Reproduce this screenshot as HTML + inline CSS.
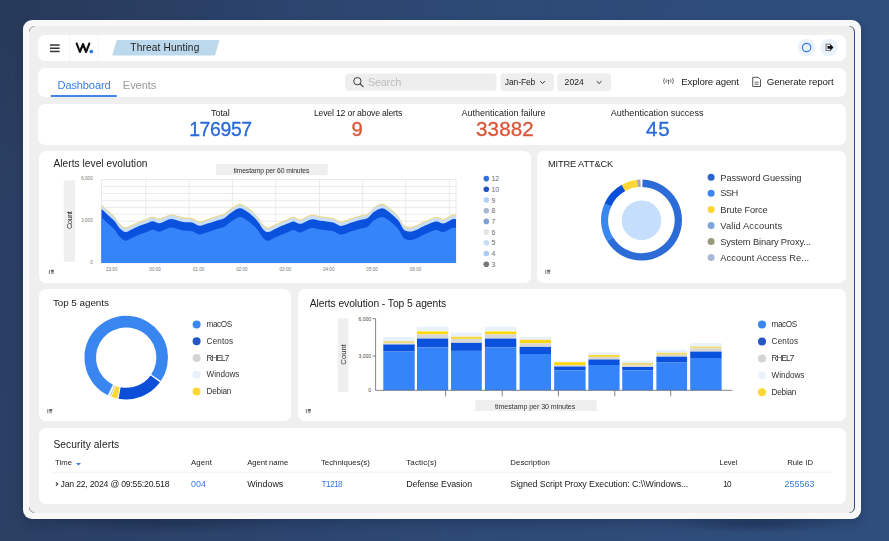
<!DOCTYPE html>
<html><head><meta charset="utf-8">
<style>
html,body{margin:0;padding:0}
body{width:889px;height:541px;overflow:hidden;position:relative;font-family:"Liberation Sans",sans-serif;color:#222;
background:radial-gradient(ellipse 300px 200px at 0 0,rgba(40,55,85,.6),rgba(40,55,85,0)),linear-gradient(90deg,#2c4166 0%,#2e4a76 50%,#2f4e7d 100%);}
.dots{position:absolute;inset:0;background-image:radial-gradient(rgba(25,35,60,.22) 0.5px,transparent 0.8px);background-size:2px 2px;-webkit-mask-image:linear-gradient(100deg,#000 0%,rgba(0,0,0,.5) 40%,transparent 70%)}
.frame{position:absolute;left:23px;top:20px;width:838px;height:499px;background:#f8f8f8;border-radius:9px;box-shadow:0 5px 10px rgba(15,25,45,.22)}
.inner{position:absolute;left:29px;top:26px;width:825px;height:487px;background:#efefef;border-radius:6px;border-right:1px solid #2f4a77}
.card{position:absolute;background:#fff;border-radius:7px}
.t{position:absolute;white-space:pre;line-height:1}
svg{position:absolute;left:0;top:0}
</style></head><body>
<div class="dots"></div>
<div style="position:absolute;left:670px;top:514px;width:170px;height:22px;background:radial-gradient(ellipse 50% 50% at 50% 40%,rgba(25,40,70,.45),rgba(25,40,70,0))"></div>
<div style="position:absolute;left:50px;top:514px;width:240px;height:22px;background:radial-gradient(ellipse 50% 50% at 50% 40%,rgba(25,40,70,.35),rgba(25,40,70,0))"></div>
<div class="frame"></div>
<div class="inner"></div>
<div class="card" style="left:37.5px;top:34.7px;width:808.5px;height:26.3px"></div>
<div class="card" style="left:37.5px;top:68px;width:808.5px;height:28.5px"></div>
<div class="card" style="left:37.5px;top:103.5px;width:808.5px;height:41.5px"></div>
<div class="card" style="left:38.5px;top:150.8px;width:492px;height:131.9px"></div>
<div class="card" style="left:536.6px;top:150.8px;width:309.4px;height:131.9px"></div>
<div class="card" style="left:38.5px;top:288.7px;width:252.5px;height:132.1px"></div>
<div class="card" style="left:298px;top:288.7px;width:548px;height:132.1px"></div>
<div class="card" style="left:38.5px;top:428px;width:807.5px;height:76px"></div>

<svg width="889" height="541" viewBox="0 0 889 541" style="font-family:'Liberation Sans',sans-serif">
<g fill="none" stroke="#6d7585" stroke-width="0.7">
<path d="M29.3,31.5 A5,5 0 0 1 34.3,26.5"/>
<path d="M29.3,507.5 A5,5 0 0 0 34.3,512.5"/>
<path d="M849.5,26.5 A5,5 0 0 1 854.5,31.5"/>
<path d="M854.5,507.5 A5,5 0 0 1 849.5,512.5"/>
</g>
<!-- header -->
<polyline points="76.7,43.6 79.9,52 83,44 86.1,52 89.3,43.6" fill="none" stroke="#111" stroke-width="2.1" stroke-linecap="round" stroke-linejoin="round"/>
<circle cx="91.3" cy="51.6" r="1.9" fill="#2f7bf0"/>
<g fill="#333"><rect x="50" y="44.3" width="9.6" height="1.5"/><rect x="50" y="47.5" width="9.6" height="1.5"/><rect x="50" y="50.7" width="9.6" height="1.5"/></g>
<line x1="69.6" y1="36" x2="69.6" y2="60" stroke="#f5f5f5" stroke-width="1"/>
<line x1="98.3" y1="36" x2="98.3" y2="60" stroke="#f5f5f5" stroke-width="1"/>
<path d="M117.5,40.1 L218.5,40.1 Q219.5,40.1 219.2,41 L215.2,55 Q214.9,55.6 214,55.6 L113,55.6 Q112.1,55.6 112.4,54.7 L116.5,41 Q116.8,40.1 117.5,40.1 Z" fill="#bcd8ec"/>
<circle cx="806.6" cy="47.5" r="8.8" fill="#e9f2fd"/>
<circle cx="806.6" cy="47.5" r="4.2" fill="none" stroke="#3a7de0" stroke-width="1.2"/>
<circle cx="829.2" cy="47.5" r="8.8" fill="#e9f2fd"/>
<rect x="826" y="44.2" width="4.5" height="6.4" fill="none" stroke="#666" stroke-width="0.9"/>
<path d="M827.5,46 L830.5,46 L830.5,44.3 L833.5,47.4 L830.5,50.5 L830.5,48.8 L827.5,48.8 Z" fill="#111"/>
<!-- tabs row -->
<rect x="50.7" y="95" width="66.1" height="2" fill="#4287e8"/>
<rect x="345.2" y="73.5" width="151.3" height="17.3" rx="3" fill="#eeeeee"/>
<circle cx="357.4" cy="81.2" r="3.7" fill="none" stroke="#333" stroke-width="0.95"/>
<line x1="360.1" y1="83.9" x2="363.1" y2="86.7" stroke="#333" stroke-width="1.1" stroke-linecap="round"/>
<rect x="500.5" y="73.2" width="53.5" height="18.1" rx="3.5" fill="#eeeeee"/>
<rect x="557.2" y="73.2" width="53.8" height="18.1" rx="3.5" fill="#eeeeee"/>
<path d="M540.3,81.2 L542.6,83.5 L544.9,81.2" fill="none" stroke="#333" stroke-width="1"/>
<path d="M596.7,81.2 L599.1,83.5 L601.5,81.2" fill="none" stroke="#333" stroke-width="1"/>
<g fill="none" stroke="#555" stroke-width="0.8">
<path d="M664.5,78 Q662.6,81 664.5,84"/><path d="M672.5,78 Q674.4,81 672.5,84"/>
<path d="M666.5,79.3 Q665.4,81 666.5,82.7"/><path d="M670.5,79.3 Q671.6,81 670.5,82.7"/>
<line x1="668.5" y1="80.5" x2="668.5" y2="84.5"/>
</g>
<circle cx="668.5" cy="80.6" r="0.9" fill="#555"/>
<path d="M752.7,77.3 L758.3,77.3 L760.5,79.5 L760.5,86.5 L752.7,86.5 Z" fill="none" stroke="#444" stroke-width="0.9"/>
<line x1="754.6" y1="82.2" x2="758.6" y2="82.2" stroke="#444" stroke-width="0.8"/>
<line x1="754.6" y1="84.2" x2="758.6" y2="84.2" stroke="#444" stroke-width="0.8"/>
<!-- alerts chart -->
<rect x="216" y="163.9" width="111.7" height="11.3" fill="#efefef"/>
<rect x="63.8" y="180.4" width="11.1" height="81.6" fill="#efefef"/>
<g stroke="#e3e3e3" stroke-width="0.7"><line x1="101.5" y1="179.50" x2="456" y2="179.50"/>
<line x1="101.5" y1="186.46" x2="456" y2="186.46"/>
<line x1="101.5" y1="193.42" x2="456" y2="193.42"/>
<line x1="101.5" y1="200.38" x2="456" y2="200.38"/>
<line x1="101.5" y1="207.33" x2="456" y2="207.33"/>
<line x1="101.5" y1="214.29" x2="456" y2="214.29"/>
<line x1="101.5" y1="221.25" x2="456" y2="221.25"/>
<line x1="101.5" y1="228.21" x2="456" y2="228.21"/>
<line x1="101.5" y1="235.17" x2="456" y2="235.17"/>
<line x1="101.5" y1="242.12" x2="456" y2="242.12"/>
<line x1="101.5" y1="249.08" x2="456" y2="249.08"/>
<line x1="101.5" y1="256.04" x2="456" y2="256.04"/>
<line x1="101.5" y1="263.00" x2="456" y2="263.00"/>
<line x1="101.5" y1="179.5" x2="101.5" y2="263.0"/>
<line x1="145.8" y1="179.5" x2="145.8" y2="263.0"/>
<line x1="189.1" y1="179.5" x2="189.1" y2="263.0"/>
<line x1="232.4" y1="179.5" x2="232.4" y2="263.0"/>
<line x1="275.7" y1="179.5" x2="275.7" y2="263.0"/>
<line x1="319.5" y1="179.5" x2="319.5" y2="263.0"/>
<line x1="362.7" y1="179.5" x2="362.7" y2="263.0"/>
<line x1="405.8" y1="179.5" x2="405.8" y2="263.0"/>
<line x1="449.4" y1="179.5" x2="449.4" y2="263.0"/>
<line x1="456" y1="179.5" x2="456" y2="263.0"/></g>
<path d="M101.5,204.4 C102.7,205.5 106.6,209.1 108.8,211.1 C111.0,213.1 112.8,214.4 114.6,216.5 C116.4,218.6 117.9,221.8 119.7,223.6 C121.5,225.4 123.5,227.3 125.6,227.5 C127.7,227.7 129.9,225.7 132.2,224.6 C134.5,223.5 137.1,222.2 139.5,221.2 C141.9,220.2 144.6,219.5 146.8,218.7 C149.0,217.9 150.5,216.6 152.6,216.6 C154.7,216.6 157.2,218.6 159.2,218.6 C161.1,218.6 162.4,217.5 164.3,216.8 C166.2,216.1 168.7,214.6 170.9,214.4 C173.1,214.2 175.4,215.3 177.5,215.8 C179.6,216.3 180.9,216.9 183.3,217.3 C185.7,217.7 189.4,217.3 192.1,218.0 C194.8,218.7 196.7,221.1 199.4,221.2 C202.1,221.3 205.3,219.6 208.2,218.7 C211.1,217.8 214.3,216.6 217.0,215.8 C219.7,214.9 222.0,214.8 224.3,213.6 C226.6,212.4 228.2,210.2 230.8,208.5 C233.4,206.8 236.9,203.9 239.6,203.7 C242.3,203.4 244.5,205.5 246.9,207.0 C249.3,208.5 252.2,211.1 254.2,212.9 C256.1,214.7 257.1,216.1 258.6,218.0 C260.1,219.9 261.4,223.0 263.0,224.6 C264.6,226.2 265.9,227.6 268.1,227.5 C270.3,227.4 273.1,225.1 276.2,223.8 C279.2,222.5 283.5,220.7 286.4,219.5 C289.3,218.3 291.4,216.8 293.7,216.8 C296.0,216.7 297.4,219.5 300.3,219.2 C303.2,218.9 308.0,215.3 311.3,214.8 C314.6,214.3 316.4,215.7 320.0,216.2 C323.6,216.7 329.7,217.1 333.2,218.0 C336.7,218.9 338.1,221.4 341.0,221.4 C343.9,221.4 347.6,219.2 350.8,218.2 C354.0,217.2 357.4,216.3 360.2,215.5 C363.0,214.7 365.4,214.8 367.7,213.5 C369.9,212.2 371.4,209.0 373.7,207.4 C375.9,205.8 378.9,204.0 381.2,203.8 C383.4,203.6 384.4,204.1 387.2,206.1 C390.0,208.1 395.3,212.4 398.0,215.5 C400.7,218.6 401.5,222.7 403.4,224.6 C405.3,226.5 407.5,226.8 409.5,227.0 C411.5,227.2 413.2,226.5 415.6,225.6 C418.0,224.7 420.3,223.0 423.7,221.6 C427.1,220.2 432.6,217.3 435.8,216.9 C439.1,216.5 440.5,219.2 443.2,218.9 C445.9,218.6 449.9,215.5 452.0,214.8 C454.1,214.1 455.3,214.6 456.0,214.6 L456,263.0 L101.5,263.0 Z" fill="#f0d98a"/>
<path d="M101.5,205.6 C102.7,206.7 106.6,210.3 108.8,212.3 C111.0,214.3 112.8,215.6 114.6,217.7 C116.4,219.8 117.9,223.0 119.7,224.8 C121.5,226.6 123.5,228.5 125.6,228.7 C127.7,228.9 129.9,226.9 132.2,225.8 C134.5,224.8 137.1,223.4 139.5,222.4 C141.9,221.4 144.6,220.7 146.8,219.9 C149.0,219.1 150.5,217.8 152.6,217.8 C154.7,217.8 157.2,219.8 159.2,219.8 C161.1,219.8 162.4,218.7 164.3,218.0 C166.2,217.3 168.7,215.8 170.9,215.6 C173.1,215.4 175.4,216.5 177.5,217.0 C179.6,217.5 180.9,218.1 183.3,218.5 C185.7,218.9 189.4,218.6 192.1,219.2 C194.8,219.9 196.7,222.3 199.4,222.4 C202.1,222.5 205.3,220.8 208.2,219.9 C211.1,219.0 214.3,217.8 217.0,217.0 C219.7,216.2 222.0,216.0 224.3,214.8 C226.6,213.6 228.2,211.4 230.8,209.7 C233.4,208.1 236.9,205.2 239.6,204.9 C242.3,204.7 244.5,206.7 246.9,208.2 C249.3,209.7 252.2,212.3 254.2,214.1 C256.1,215.9 257.1,217.3 258.6,219.2 C260.1,221.2 261.4,224.2 263.0,225.8 C264.6,227.4 265.9,228.8 268.1,228.7 C270.3,228.6 273.1,226.3 276.2,225.0 C279.2,223.7 283.5,221.9 286.4,220.7 C289.3,219.5 291.4,218.1 293.7,218.0 C296.0,217.9 297.4,220.7 300.3,220.4 C303.2,220.1 308.0,216.5 311.3,216.0 C314.6,215.5 316.4,216.9 320.0,217.4 C323.6,217.9 329.7,218.3 333.2,219.2 C336.7,220.1 338.1,222.6 341.0,222.6 C343.9,222.6 347.6,220.4 350.8,219.4 C354.0,218.4 357.4,217.5 360.2,216.7 C363.0,215.9 365.4,216.1 367.7,214.7 C369.9,213.4 371.4,210.2 373.7,208.6 C375.9,207.0 378.9,205.2 381.2,205.0 C383.4,204.8 384.4,205.4 387.2,207.3 C390.0,209.2 395.3,213.6 398.0,216.7 C400.7,219.8 401.5,223.9 403.4,225.8 C405.3,227.7 407.5,228.0 409.5,228.2 C411.5,228.4 413.2,227.7 415.6,226.8 C418.0,225.9 420.3,224.2 423.7,222.8 C427.1,221.4 432.6,218.6 435.8,218.1 C439.1,217.7 440.5,220.5 443.2,220.1 C445.9,219.8 449.9,216.7 452.0,216.0 C454.1,215.3 455.3,215.8 456.0,215.8 L456,263.0 L101.5,263.0 Z" fill="#c8def8"/>
<path d="M101.5,209.0 C102.7,210.1 106.6,213.7 108.8,215.7 C111.0,217.7 112.8,219.0 114.6,221.1 C116.4,223.2 117.9,226.4 119.7,228.2 C121.5,230.0 123.5,231.9 125.6,232.1 C127.7,232.3 129.9,230.2 132.2,229.2 C134.5,228.1 137.1,226.8 139.5,225.8 C141.9,224.8 144.6,224.1 146.8,223.3 C149.0,222.5 150.5,221.2 152.6,221.2 C154.7,221.2 157.2,223.2 159.2,223.2 C161.1,223.2 162.4,222.1 164.3,221.4 C166.2,220.7 168.7,219.2 170.9,219.0 C173.1,218.8 175.4,219.9 177.5,220.4 C179.6,220.9 180.9,221.5 183.3,221.9 C185.7,222.3 189.4,221.9 192.1,222.6 C194.8,223.2 196.7,225.7 199.4,225.8 C202.1,225.9 205.3,224.2 208.2,223.3 C211.1,222.4 214.3,221.2 217.0,220.4 C219.7,219.5 222.0,219.4 224.3,218.2 C226.6,217.0 228.2,214.8 230.8,213.1 C233.4,211.4 236.9,208.5 239.6,208.3 C242.3,208.0 244.5,210.1 246.9,211.6 C249.3,213.1 252.2,215.7 254.2,217.5 C256.1,219.3 257.1,220.7 258.6,222.6 C260.1,224.5 261.4,227.6 263.0,229.2 C264.6,230.8 265.9,232.2 268.1,232.1 C270.3,232.0 273.1,229.7 276.2,228.4 C279.2,227.1 283.5,225.3 286.4,224.1 C289.3,222.9 291.4,221.4 293.7,221.4 C296.0,221.3 297.4,224.1 300.3,223.8 C303.2,223.5 308.0,219.9 311.3,219.4 C314.6,218.9 316.4,220.3 320.0,220.8 C323.6,221.3 329.7,221.7 333.2,222.6 C336.7,223.5 338.1,226.0 341.0,226.0 C343.9,226.0 347.6,223.8 350.8,222.8 C354.0,221.8 357.4,220.9 360.2,220.1 C363.0,219.3 365.4,219.4 367.7,218.1 C369.9,216.8 371.4,213.6 373.7,212.0 C375.9,210.4 378.9,208.6 381.2,208.4 C383.4,208.2 384.4,208.8 387.2,210.7 C390.0,212.6 395.3,217.0 398.0,220.1 C400.7,223.2 401.5,227.3 403.4,229.2 C405.3,231.1 407.5,231.4 409.5,231.6 C411.5,231.8 413.2,231.1 415.6,230.2 C418.0,229.3 420.3,227.6 423.7,226.2 C427.1,224.8 432.6,221.9 435.8,221.5 C439.1,221.1 440.5,223.8 443.2,223.5 C445.9,223.2 449.9,220.1 452.0,219.4 C454.1,218.7 455.3,219.2 456.0,219.2 L456,263.0 L101.5,263.0 Z" fill="#0a52dd"/>
<path d="M101.5,217.6 C102.7,218.7 106.6,222.3 108.8,224.3 C111.0,226.3 112.8,227.6 114.6,229.7 C116.4,231.8 117.9,235.0 119.7,236.8 C121.5,238.6 123.5,240.5 125.6,240.7 C127.7,240.9 129.9,238.9 132.2,237.8 C134.5,236.8 137.1,235.4 139.5,234.4 C141.9,233.4 144.6,232.7 146.8,231.9 C149.0,231.1 150.5,229.8 152.6,229.8 C154.7,229.8 157.2,231.8 159.2,231.8 C161.1,231.8 162.4,230.7 164.3,230.0 C166.2,229.3 168.7,227.8 170.9,227.6 C173.1,227.4 175.4,228.5 177.5,229.0 C179.6,229.5 180.9,230.1 183.3,230.5 C185.7,230.9 189.4,230.6 192.1,231.2 C194.8,231.9 196.7,234.3 199.4,234.4 C202.1,234.5 205.3,232.8 208.2,231.9 C211.1,231.0 214.3,229.8 217.0,229.0 C219.7,228.2 222.0,228.0 224.3,226.8 C226.6,225.6 228.2,223.4 230.8,221.7 C233.4,220.1 236.9,217.2 239.6,216.9 C242.3,216.7 244.5,218.7 246.9,220.2 C249.3,221.7 252.2,224.3 254.2,226.1 C256.1,227.9 257.1,229.3 258.6,231.2 C260.1,233.2 261.4,236.2 263.0,237.8 C264.6,239.4 265.9,240.8 268.1,240.7 C270.3,240.6 273.1,238.3 276.2,237.0 C279.2,235.7 283.5,233.9 286.4,232.7 C289.3,231.5 291.4,230.1 293.7,230.0 C296.0,229.9 297.4,232.7 300.3,232.4 C303.2,232.1 308.0,228.5 311.3,228.0 C314.6,227.5 316.4,228.9 320.0,229.4 C323.6,229.9 329.7,230.3 333.2,231.2 C336.7,232.1 338.1,234.6 341.0,234.6 C343.9,234.6 347.6,232.4 350.8,231.4 C354.0,230.4 357.4,229.5 360.2,228.7 C363.0,227.9 365.4,228.1 367.7,226.7 C369.9,225.4 371.4,222.2 373.7,220.6 C375.9,219.0 378.9,217.2 381.2,217.0 C383.4,216.8 384.4,217.4 387.2,219.3 C390.0,221.2 395.3,225.6 398.0,228.7 C400.7,231.8 401.5,235.9 403.4,237.8 C405.3,239.7 407.5,240.0 409.5,240.2 C411.5,240.4 413.2,239.7 415.6,238.8 C418.0,237.9 420.3,236.2 423.7,234.8 C427.1,233.4 432.6,230.6 435.8,230.1 C439.1,229.7 440.5,232.5 443.2,232.1 C445.9,231.8 449.9,228.7 452.0,228.0 C454.1,227.3 455.3,227.8 456.0,227.8 L456,263.0 L101.5,263.0 Z" fill="#3584f9"/>
<g font-size="4.6" fill="#777" text-anchor="end"><text x="92.7" y="179.9">6,000</text><text x="92.7" y="221.5">3,000</text><text x="92.7" y="264.3">0</text></g>
<g font-size="4.6" fill="#777" text-anchor="middle"><text x="111.7" y="271">23:00</text><text x="155.1" y="271">00:00</text><text x="198.5" y="271">01:00</text><text x="241.9" y="271">02:00</text><text x="285.3" y="271">03:00</text><text x="328.7" y="271">04:00</text><text x="372.1" y="271">05:00</text><text x="415.5" y="271">06:00</text></g>
<g font-size="6.8" fill="#6a6a6a"><circle cx="486.3" cy="178.6" r="2.8" fill="#2d6fdb"/><text x="491.5" y="181.2">12</text><circle cx="486.3" cy="189.3" r="2.8" fill="#2255c4"/><text x="491.5" y="191.9">10</text><circle cx="486.3" cy="200.0" r="2.8" fill="#b3d0f7"/><text x="491.5" y="202.6">9</text><circle cx="486.3" cy="210.7" r="2.8" fill="#a8b7d6"/><text x="491.5" y="213.3">8</text><circle cx="486.3" cy="221.4" r="2.8" fill="#7aa0d4"/><text x="491.5" y="224.0">7</text><circle cx="486.3" cy="232.1" r="2.8" fill="#e3e3e3"/><text x="491.5" y="234.7">6</text><circle cx="486.3" cy="242.8" r="2.8" fill="#c6ddfa"/><text x="491.5" y="245.4">5</text><circle cx="486.3" cy="253.5" r="2.8" fill="#a9cbf5"/><text x="491.5" y="256.1">4</text><circle cx="486.3" cy="264.2" r="2.8" fill="#777777"/><text x="491.5" y="266.8">3</text></g>
<!-- MITRE -->
<path d="M642.56,179.61 A40.5,40.5 0 1 1 606.86,241.08 L613.10,237.30 A33.2,33.2 0 1 0 642.37,186.91 Z" fill="#2d6cd6"/><path d="M606.86,241.08 A40.5,40.5 0 0 1 604.59,203.43 L611.24,206.44 A33.2,33.2 0 0 0 613.10,237.30 Z" fill="#3b87f0"/><path d="M604.59,203.43 A40.5,40.5 0 0 1 621.74,184.75 L625.30,191.12 A33.2,33.2 0 0 0 611.24,206.44 Z" fill="#0b4fd8"/><path d="M621.74,184.75 A40.5,40.5 0 0 1 636.99,179.85 L637.80,187.11 A33.2,33.2 0 0 0 625.30,191.12 Z" fill="#fdd835"/><path d="M636.99,179.85 A40.5,40.5 0 0 1 640.44,179.61 L640.63,186.91 A33.2,33.2 0 0 0 637.80,187.11 Z" fill="#a9a9a9"/><circle cx="641.5" cy="220.29999999999998" r="19.8" fill="#c5defb"/>
<g font-size="9.1" fill="#333"><circle cx="711.1" cy="177.2" r="3.5" fill="#2d64cc"/><circle cx="711.1" cy="193.3" r="3.5" fill="#3b86f0"/><circle cx="711.1" cy="209.4" r="3.5" fill="#fdd835"/><circle cx="711.1" cy="225.4" r="3.5" fill="#7ea6d8"/><circle cx="711.1" cy="241.5" r="3.5" fill="#9a9a7a"/><circle cx="711.1" cy="257.6" r="3.5" fill="#a9b9d8"/></g>
<!-- top5 -->
<path d="M107.88,395.17 A41.8,41.8 0 1 1 160.77,381.10 L151.18,374.57 A30.2,30.2 0 1 0 112.96,384.74 Z" fill="#3a86f0"/><path d="M159.93,382.29 A41.8,41.8 0 0 1 118.51,398.69 L120.64,387.28 A30.2,30.2 0 0 0 150.57,375.44 Z" fill="#0b4fd8"/><path d="M117.37,398.46 A41.8,41.8 0 0 1 111.56,396.75 L115.62,385.89 A30.2,30.2 0 0 0 119.82,387.12 Z" fill="#fdd835"/><path d="M111.08,396.57 A41.8,41.8 0 0 1 109.60,395.96 L114.21,385.32 A30.2,30.2 0 0 0 115.28,385.76 Z" fill="#d4d4d4"/><path d="M109.33,395.85 A41.8,41.8 0 0 1 108.01,395.23 L113.06,384.79 A30.2,30.2 0 0 0 114.01,385.23 Z" fill="#e8f1fc"/>
<g font-size="7.6" fill="#333"><circle cx="196.6" cy="324.6" r="4" fill="#3a86f0"/><circle cx="196.6" cy="341.3" r="4" fill="#2457c5"/><circle cx="196.6" cy="358.0" r="4" fill="#d4d4d4"/><circle cx="196.6" cy="374.8" r="4" fill="#e8f1fc"/><circle cx="196.6" cy="391.5" r="4" fill="#fdd835"/></g>
<!-- bars -->
<rect x="337.8" y="318.1" width="10.6" height="73.8" fill="#efefef"/>
<rect x="383.3" y="337.0" width="31.4" height="4.0" fill="#e8f1fc"/><rect x="383.3" y="341.0" width="31.4" height="2.3" fill="#efdc80"/><rect x="383.3" y="343.3" width="31.4" height="1.2" fill="#d6d6d6"/><rect x="383.3" y="344.5" width="31.4" height="7.1" fill="#0a52dd"/><rect x="383.3" y="351.6" width="31.4" height="38.7" fill="#3584f9"/><rect x="417.0" y="326.8" width="31.2" height="4.7" fill="#e8f1fc"/><rect x="417.0" y="331.5" width="31.2" height="2.9" fill="#fcd80a"/><rect x="417.0" y="334.4" width="31.2" height="4.2" fill="#d6d6d6"/><rect x="417.0" y="338.6" width="31.2" height="8.8" fill="#0a52dd"/><rect x="417.0" y="347.4" width="31.2" height="42.9" fill="#3584f9"/><rect x="451.0" y="332.7" width="30.8" height="4.0" fill="#e8f1fc"/><rect x="451.0" y="336.7" width="30.8" height="2.4" fill="#f3d943"/><rect x="451.0" y="339.1" width="30.8" height="3.8" fill="#d6d6d6"/><rect x="451.0" y="342.9" width="30.8" height="8.0" fill="#0a52dd"/><rect x="451.0" y="350.9" width="30.8" height="39.4" fill="#3584f9"/><rect x="484.9" y="326.8" width="31.4" height="4.7" fill="#e8f1fc"/><rect x="484.9" y="331.5" width="31.4" height="2.9" fill="#fcd80a"/><rect x="484.9" y="334.4" width="31.4" height="4.2" fill="#d6d6d6"/><rect x="484.9" y="338.6" width="31.4" height="8.8" fill="#0a52dd"/><rect x="484.9" y="347.4" width="31.4" height="42.9" fill="#3584f9"/><rect x="519.6" y="336.7" width="31.4" height="3.1" fill="#e8f1fc"/><rect x="519.6" y="339.8" width="31.4" height="3.5" fill="#fad416"/><rect x="519.6" y="343.3" width="31.4" height="3.6" fill="#d6d6d6"/><rect x="519.6" y="346.9" width="31.4" height="7.1" fill="#0a52dd"/><rect x="519.6" y="354.0" width="31.4" height="36.3" fill="#3584f9"/><rect x="554.2" y="361.1" width="31.4" height="1.1" fill="#e8f1fc"/><rect x="554.2" y="362.2" width="31.4" height="2.8" fill="#fcd80a"/><rect x="554.2" y="365.0" width="31.4" height="1.5" fill="#d6d6d6"/><rect x="554.2" y="366.5" width="31.4" height="4.0" fill="#0a52dd"/><rect x="554.2" y="370.5" width="31.4" height="19.8" fill="#3584f9"/><rect x="588.4" y="352.3" width="31.2" height="2.6" fill="#e8f1fc"/><rect x="588.4" y="354.9" width="31.2" height="2.2" fill="#f6da40"/><rect x="588.4" y="357.1" width="31.2" height="2.4" fill="#d6d6d6"/><rect x="588.4" y="359.5" width="31.2" height="5.5" fill="#0a52dd"/><rect x="588.4" y="365.0" width="31.2" height="25.3" fill="#3584f9"/><rect x="622.2" y="361.1" width="30.9" height="1.7" fill="#e8f1fc"/><rect x="622.2" y="362.8" width="30.9" height="2.6" fill="#efdc80"/><rect x="622.2" y="365.4" width="30.9" height="1.6" fill="#d6d6d6"/><rect x="622.2" y="367.0" width="30.9" height="3.5" fill="#0a52dd"/><rect x="622.2" y="370.5" width="30.9" height="19.8" fill="#3584f9"/><rect x="656.4" y="349.7" width="30.7" height="3.0" fill="#e8f1fc"/><rect x="656.4" y="352.7" width="30.7" height="2.2" fill="#f0dc70"/><rect x="656.4" y="354.9" width="30.7" height="1.8" fill="#d6d6d6"/><rect x="656.4" y="356.7" width="30.7" height="5.9" fill="#0a52dd"/><rect x="656.4" y="362.6" width="30.7" height="27.7" fill="#3584f9"/><rect x="690.2" y="343.1" width="31.4" height="3.3" fill="#e8f1fc"/><rect x="690.2" y="346.4" width="31.4" height="1.9" fill="#f0dc78"/><rect x="690.2" y="348.3" width="31.4" height="3.3" fill="#d6d6d6"/><rect x="690.2" y="351.6" width="31.4" height="6.4" fill="#0a52dd"/><rect x="690.2" y="358.0" width="31.4" height="32.3" fill="#3584f9"/>
<g stroke="#666" stroke-width="0.8"><line x1="375.6" y1="318.7" x2="375.6" y2="390.3"/><line x1="375.6" y1="390.3" x2="732.5" y2="390.3"/><line x1="372.5" y1="318.7" x2="375.6" y2="318.7"/><line x1="372.5" y1="356" x2="375.6" y2="356"/><line x1="445.6" y1="390.3" x2="445.6" y2="396.4"/><line x1="502.2" y1="390.3" x2="502.2" y2="396.4"/><line x1="558.4" y1="390.3" x2="558.4" y2="396.4"/><line x1="614.8" y1="390.3" x2="614.8" y2="396.4"/><line x1="670.7" y1="390.3" x2="670.7" y2="396.4"/></g>
<g font-size="5" fill="#444" text-anchor="end"><text x="371.1" y="320.7">6,000</text><text x="371.1" y="357.9">3,000</text><text x="371.1" y="392.2">0</text></g>
<rect x="475.2" y="400.1" width="121.5" height="11" fill="#efefef"/>
<g font-size="7.6" fill="#333"><circle cx="762" cy="324.6" r="4" fill="#3a86f0"/><circle cx="762" cy="341.5" r="4" fill="#2457c5"/><circle cx="762" cy="358.4" r="4" fill="#d4d4d4"/><circle cx="762" cy="375.3" r="4" fill="#e8f1fc"/><circle cx="762" cy="392.2" r="4" fill="#fdd835"/></g>
<!-- table -->
<line x1="52.3" y1="472.2" x2="832.7" y2="472.2" stroke="#eeeeee" stroke-width="0.8"/>
<path d="M76,463 L81,463 L78.5,465.6 Z" fill="#3a7de0"/>
<path d="M55.9,482.3 L57.8,484.1 L55.9,485.9" fill="none" stroke="#333" stroke-width="1.1"/>
<!-- small icons -->
<rect x="48.9" y="269.8" width="1.1" height="4.2" fill="#888"/><rect x="50.9" y="269.8" width="3" height="2.1" fill="#666"/><rect x="50.9" y="271.90000000000003" width="3" height="2.1" fill="#b0b0b0"/><rect x="545.2" y="269.8" width="1.1" height="4.2" fill="#888"/><rect x="547.2" y="269.8" width="3" height="2.1" fill="#666"/><rect x="547.2" y="271.90000000000003" width="3" height="2.1" fill="#b0b0b0"/><rect x="47.2" y="409" width="1.1" height="4.2" fill="#888"/><rect x="49.2" y="409" width="3" height="2.1" fill="#666"/><rect x="49.2" y="411.1" width="3" height="2.1" fill="#b0b0b0"/><rect x="305.8" y="409" width="1.1" height="4.2" fill="#888"/><rect x="307.8" y="409" width="3" height="2.1" fill="#666"/><rect x="307.8" y="411.1" width="3" height="2.1" fill="#b0b0b0"/>
</svg>

<!-- text -->

<svg width="889" height="541" viewBox="0 0 889 541" style="font-family:'Liberation Sans',sans-serif;will-change:transform"><text x="130.3" y="51" font-size="10.15" fill="#222" textLength="69.0" lengthAdjust="spacing">Threat Hunting</text>
<text x="57.6" y="89" font-size="11.09" fill="#3a7de0" textLength="53.0" lengthAdjust="spacing">Dashboard</text>
<text x="122.8" y="89" font-size="11.12" fill="#9a9a9a" textLength="33.6" lengthAdjust="spacing">Events</text>
<text x="367.9" y="86" font-size="11.03" fill="#bdbdbd" textLength="33.4" lengthAdjust="spacing">Search</text>
<text x="504.8" y="85" font-size="8.49" fill="#222" textLength="30.5" lengthAdjust="spacing">Jan-Feb</text>
<text x="564.6" y="85" font-size="8.56" fill="#222" textLength="19.1" lengthAdjust="spacing">2024</text>
<text x="681.3" y="85" font-size="9.63" fill="#222" textLength="57.7" lengthAdjust="spacing">Explore agent</text>
<text x="766.8" y="85" font-size="9.68" fill="#222" textLength="66.8" lengthAdjust="spacing">Generate report</text>
<text x="211.0" y="116" font-size="9.03" fill="#222" textLength="18.8" lengthAdjust="spacing">Total</text>
<text x="189.2" y="136" font-size="19.40" fill="#2a6bd6" stroke="#2a6bd6" stroke-width="0.35" textLength="62.9" lengthAdjust="spacing">176957</text>
<text x="313.9" y="116" font-size="8.70" fill="#222" textLength="88.5" lengthAdjust="spacing">Level 12 or above alerts</text>
<text x="351.6" y="136" font-size="20.28" fill="#d9573b" stroke="#d9573b" stroke-width="0.35" textLength="11.8" lengthAdjust="spacing">9</text>
<text x="461.5" y="116" font-size="8.98" fill="#222" textLength="84.0" lengthAdjust="spacing">Authentication failure</text>
<text x="476.0" y="136" font-size="20.52" fill="#d9573b" stroke="#d9573b" stroke-width="0.35" textLength="57.7" lengthAdjust="spacing">33882</text>
<text x="610.7" y="116" font-size="9.01" fill="#222" textLength="92.7" lengthAdjust="spacing">Authentication success</text>
<text x="646.1" y="136" font-size="20.60" fill="#2a6bd6" stroke="#2a6bd6" stroke-width="0.35" textLength="23.6" lengthAdjust="spacing">45</text>
<text x="53.5" y="167" font-size="10.18" fill="#222" textLength="94.0" lengthAdjust="spacing">Alerts level evolution</text>
<text x="548.0" y="167" font-size="9.26" fill="#222" textLength="65.2" lengthAdjust="spacing">MITRE ATT&amp;CK</text>
<text x="52.9" y="306" font-size="9.89" fill="#222" textLength="56.0" lengthAdjust="spacing">Top 5 agents</text>
<text x="309.7" y="307" font-size="10.32" fill="#222" textLength="136.4" lengthAdjust="spacing">Alerts evolution - Top 5 agents</text>
<text x="53.4" y="448" font-size="10.22" fill="#222" textLength="65.8" lengthAdjust="spacing">Security alerts</text>
<text x="55.1" y="465" font-size="7.69" fill="#222" textLength="16.9" lengthAdjust="spacing">Time</text>
<text x="190.9" y="465" font-size="7.82" fill="#222" textLength="20.9" lengthAdjust="spacing">Agent</text>
<text x="247.2" y="465" font-size="7.71" fill="#222" textLength="41.0" lengthAdjust="spacing">Agent name</text>
<text x="320.9" y="465" font-size="7.81" fill="#222" textLength="48.9" lengthAdjust="spacing">Techniques(s)</text>
<text x="406.3" y="465" font-size="7.91" fill="#222" textLength="30.4" lengthAdjust="spacing">Tactic(s)</text>
<text x="510.3" y="465" font-size="7.83" fill="#222" textLength="39.6" lengthAdjust="spacing">Description</text>
<text x="719.5" y="465" font-size="7.59" fill="#222" textLength="17.8" lengthAdjust="spacing">Level</text>
<text x="787.2" y="465" font-size="7.73" fill="#222" textLength="25.8" lengthAdjust="spacing">Rule ID</text>
<text x="60.6" y="487" font-size="8.69" fill="#222" textLength="108.9" lengthAdjust="spacing">Jan 22, 2024 @ 09:55:20.518</text>
<text x="190.9" y="487" font-size="8.86" fill="#3a7de0" textLength="15.0" lengthAdjust="spacing">004</text>
<text x="247.2" y="487" font-size="8.91" fill="#222" textLength="36.1" lengthAdjust="spacing">Windows</text>
<text x="321.4" y="487" font-size="8.33" fill="#3a7de0" textLength="21.3" lengthAdjust="spacing">T1218</text>
<text x="406.3" y="487" font-size="8.86" fill="#222" textLength="65.8" lengthAdjust="spacing">Defense Evasion</text>
<text x="510.3" y="487" font-size="8.88" fill="#222" textLength="178.0" lengthAdjust="spacing">Signed Script Proxy Execution: C:\\Windows...</text>
<text x="723.3" y="487" font-size="8.18" fill="#222" textLength="8.3" lengthAdjust="spacing">10</text>
<text x="784.5" y="487" font-size="8.93" fill="#3a7de0" textLength="30.0" lengthAdjust="spacing">255563</text>
<text x="720.3" y="181" font-size="9.30" fill="#333" textLength="81.2" lengthAdjust="spacing">Password Guessing</text>
<text x="720.3" y="196" font-size="9.30" fill="#333" textLength="17.8" lengthAdjust="spacing">SSH</text>
<text x="720.3" y="213" font-size="9.30" fill="#333" textLength="47.4" lengthAdjust="spacing">Brute Force</text>
<text x="720.3" y="229" font-size="9.30" fill="#333" textLength="61.8" lengthAdjust="spacing">Valid Accounts</text>
<text x="720.3" y="245" font-size="9.30" fill="#333" textLength="90.4" lengthAdjust="spacing">System Binary Proxy...</text>
<text x="720.3" y="261" font-size="9.30" fill="#333" textLength="88.9" lengthAdjust="spacing">Account Access  Re...</text>
<text x="206.6" y="327" font-size="8.20" fill="#333" textLength="25.5" lengthAdjust="spacing">macOS</text>
<text x="771.6" y="327" font-size="8.20" fill="#333" textLength="25.5" lengthAdjust="spacing">macOS</text>
<text x="206.6" y="344" font-size="8.20" fill="#333" textLength="26.5" lengthAdjust="spacing">Centos</text>
<text x="771.6" y="344" font-size="8.20" fill="#333" textLength="26.5" lengthAdjust="spacing">Centos</text>
<text x="206.6" y="361" font-size="8.20" fill="#333" textLength="22.7" lengthAdjust="spacing">RHEL7</text>
<text x="771.6" y="361" font-size="8.20" fill="#333" textLength="22.7" lengthAdjust="spacing">RHEL7</text>
<text x="206.6" y="377" font-size="8.20" fill="#333" textLength="32.7" lengthAdjust="spacing">Windows</text>
<text x="771.6" y="378" font-size="8.20" fill="#333" textLength="32.7" lengthAdjust="spacing">Windows</text>
<text x="206.6" y="394" font-size="8.20" fill="#333" textLength="24.8" lengthAdjust="spacing">Debian</text>
<text x="771.6" y="395" font-size="8.20" fill="#333" textLength="24.8" lengthAdjust="spacing">Debian</text>
<text x="233.4" y="173" font-size="6.8" fill="#333" textLength="76" lengthAdjust="spacing">timestamp per 60 minutes</text>
<text x="495.1" y="409" font-size="7.1" fill="#333" textLength="80.2" lengthAdjust="spacing">timestamp per 30 minutes</text>
<text transform="translate(71.9,229) rotate(-90)" font-size="7.6" fill="#333" textLength="17.9" lengthAdjust="spacing">Count</text>
<text transform="translate(346.4,364.7) rotate(-90)" font-size="7.6" fill="#333" textLength="20.7" lengthAdjust="spacing">Count</text></svg>
</body></html>
